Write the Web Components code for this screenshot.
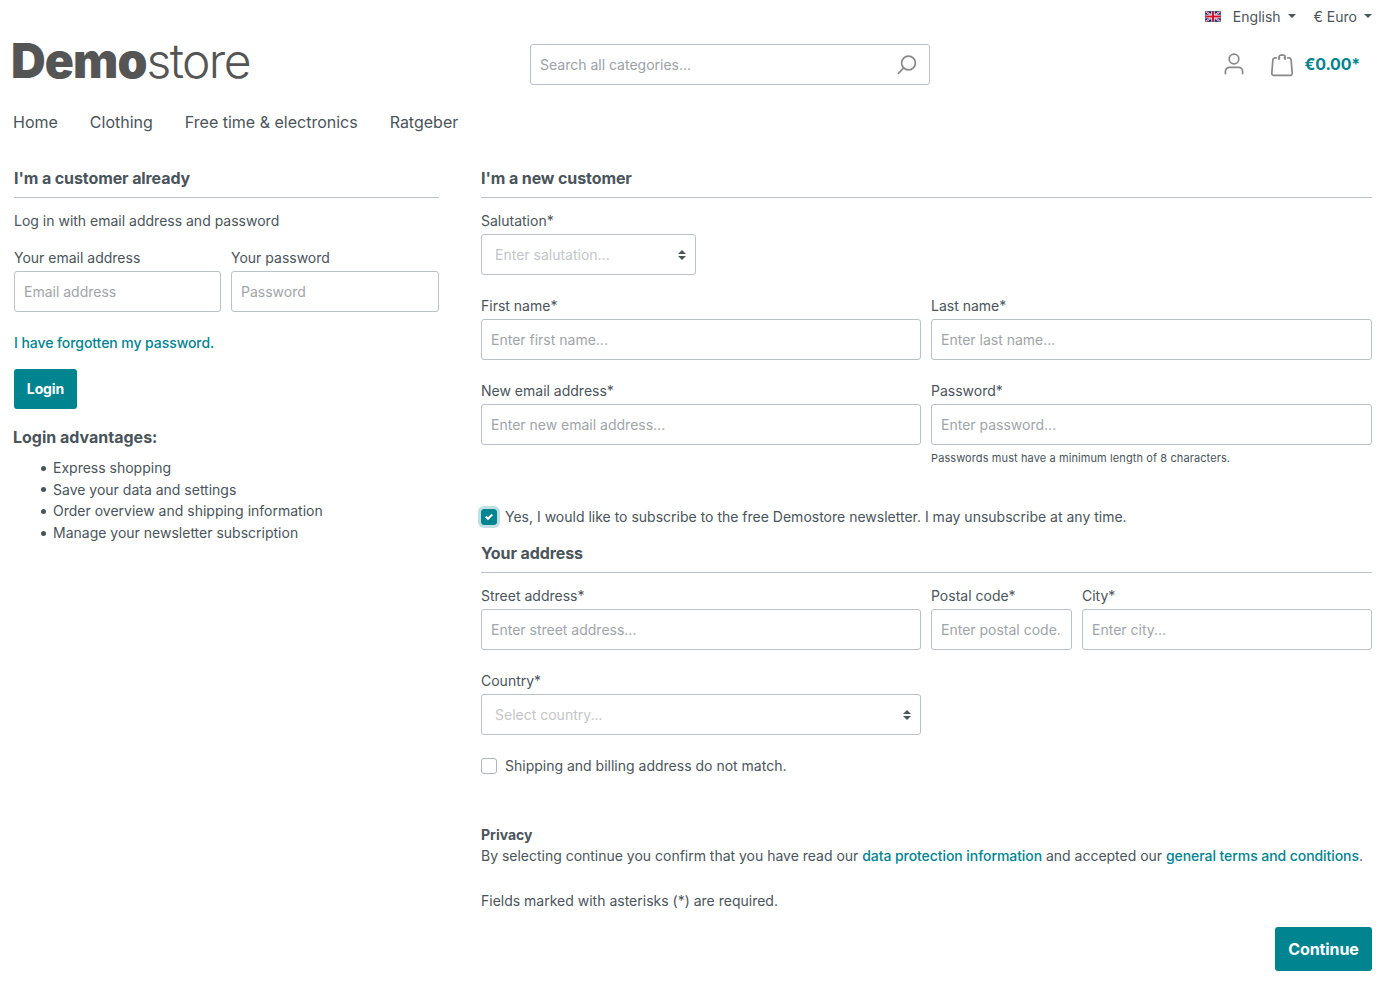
<!DOCTYPE html>
<html lang="en">
<head>
<meta charset="utf-8">
<title>Demostore</title>
<style>
    body {
        margin: 0;
        background: #fff;
        color: #4a545b;
        font: 14px/21px Inter, sans-serif;
        --primary: #008490;
        --border: #bcc1c7;
    }
</style>
</head>
<body>
<store-page></store-page>

<script>
class StoreTopBar extends HTMLElement {
    constructor() {
        super()
        this.attachShadow({ mode: 'open' }).innerHTML = `
        <style>
            :host {
                display: flex;
                justify-content: flex-end;
                height: 34px;
                align-items: center;
                padding-right: 16px;
            }
            span { margin-top: -1px; }
            .flag { width: 16px; height: 11px; margin: -2px 12px 0 0; }
            .caret {
                border: 4px solid transparent;
                border-top-color: currentColor;
                border-bottom: 0;
                margin: -2px 0 0 7px;
            }
            .currency { margin-left: 18px; }
        </style>
        <svg class="flag" viewBox="0 0 16 11">
            <rect width="16" height="11" fill="#0a2a80"/>
            <path d="M0 0l16 11M16 0L0 11" stroke="#fff" stroke-width="1.8"/>
            <path d="M0 0l16 11M16 0L0 11" stroke="#d8102a" stroke-width="0.7"/>
            <path d="M8 0v11M0 5.5h16" stroke="#fff" stroke-width="3.4"/>
            <path d="M8 0v11M0 5.5h16" stroke="#d8102a" stroke-width="2"/>
            <rect x=".5" y=".5" width="15" height="10" fill="none" stroke="#667" stroke-opacity=".5"/>
        </svg>
        <span>English</span><i class="caret"></i>
        <span class="currency">€ Euro</span><i class="caret"></i>
        `
    }
}

class StoreHeader extends HTMLElement {
    constructor() {
        super()
        this.attachShadow({ mode: 'open' }).innerHTML = `
        <style>
            :host {
                display: grid;
                grid-template-columns: 517px 400px 1fr;
                height: 61px;
                padding: 0 28px 0 13px;
            }
            .logo {
                color: #555;
                font-size: 48px;
                line-height: 54px;
                letter-spacing: -1.6px;
                font-weight: 300;
                white-space: nowrap;
                margin-left: -2px;
            }
            .logo b { font-weight: 900; letter-spacing: -0.9px; }
            .search {
                box-sizing: border-box;
                height: 41px;
                margin-top: 10px;
                border: 1px solid var(--border);
                border-radius: 3px;
                display: flex;
                align-items: center;
                padding: 0 11px 0 9px;
            }
            input {
                flex: 1;
                min-width: 0;
                border: 0;
                padding: 0;
                outline: 0;
                background: none;
                font: inherit;
                color: inherit;
            }
            input::placeholder { color: #9ba1a6; opacity: 1; }
            .actions {
                display: flex;
                justify-content: flex-end;
                align-items: center;
                height: 41px;
                margin-top: 10px;
            }
            svg { fill: none; stroke: #888; stroke-width: 1.7; stroke-linecap: round; stroke-linejoin: round; }
            .user { margin: -1px 26px 0 0; }
            .total {
                margin: -1px 0 0 11px;
                font-size: 16px;
                font-weight: 700;
                letter-spacing: -0.2px;
                color: var(--primary);
            }
        </style>
        <div class="logo"><b>Demo</b>store</div>
        <div class="search">
            <input type="text" placeholder="Search all categories...">
            <svg width="22" height="22" viewBox="0 0 22 22">
                <circle cx="12.5" cy="9" r="6.9"/><path d="M7.7 13.9l-5.3 5.4"/>
            </svg>
        </div>
        <div class="actions">
            <svg class="user" width="20" height="22" viewBox="0 0 20 22">
                <circle cx="10" cy="6" r="4.8"/>
                <path d="M1.4 20.6v-2.3a3.9 3.9 0 0 1 3.9-3.9h9.4a3.9 3.9 0 0 1 3.9 3.9v2.3"/>
            </svg>
            <svg width="24" height="24" viewBox="0 0 24 24">
                <path d="M6.4 4.8H4.9a2 2 0 0 0-2 1.8L1.8 20.2a2 2 0 0 0 2 2.2h16.4a2 2 0 0 0 2-2.2L21.1 6.6a2 2 0 0 0-2-1.8h-1.5M8.9 6.2V4.2a2 2 0 0 1 2-2h2.2a2 2 0 0 1 2 2v2M9 4.8h0.6M14.4 4.8h0.6"/>
            </svg>
            <span class="total">€0.00*</span>
        </div>
        `
    }
}

class StoreNav extends HTMLElement {
    constructor() {
        super()
        this.attachShadow({ mode: 'open' }).innerHTML = `
        <style>
            :host {
                display: flex;
                gap: 32px;
                padding: 15px 13px 0;
                font-size: 16px;
                line-height: 24px;
            }
        </style>
        <span>Home</span>
        <span>Clothing</span>
        <span>Free time &amp; electronics</span>
        <span>Ratgeber</span>
        `
    }
}

class PanelTitle extends HTMLElement {
    constructor() {
        super()
        this.attachShadow({ mode: 'open' }).innerHTML = `
        <style>
            :host {
                display: block;
                height: 31px;
                border-bottom: 1px solid var(--border);
                font-size: 16px;
                line-height: 24px;
                font-weight: 700;
                letter-spacing: -0.1px;
            }
        </style>
        <slot></slot>
        `
    }
}

class TextField extends HTMLElement {
    constructor() {
        super()
        this.attachShadow({ mode: 'open' }).innerHTML = `
        <style>
            :host { display: block; min-width: 0; }
            label { display: block; height: 24px; white-space: nowrap; }
            input {
                display: block;
                box-sizing: border-box;
                width: 100%;
                height: 41px;
                padding: 0 9px;
                border: 1px solid var(--border);
                border-radius: 3px;
                outline: 0;
                background: #fff;
                font: inherit;
                color: inherit;
            }
            input::placeholder { color: #a0a5a9; opacity: 1; }
            ::slotted(small) {
                display: block;
                font-size: 11px;
                line-height: 16px;
                letter-spacing: 0.1px;
                margin-top: 5px;
            }
        </style>
        <label for="field"></label>
        <input id="field">
        <slot></slot>
        `
    }
    connectedCallback() {
        const input = this.shadowRoot.querySelector('input')
        this.shadowRoot.querySelector('label').textContent = this.getAttribute('label')
        input.placeholder = this.getAttribute('placeholder')
        input.type = this.getAttribute('type') || 'text'
    }
}

class SelectField extends HTMLElement {
    constructor() {
        super()
        this.attachShadow({ mode: 'open' }).innerHTML = `
        <style>
            :host { display: block; min-width: 0; }
            .label { height: 24px; }
            .box {
                box-sizing: border-box;
                height: 41px;
                padding: 0 9px 0 13px;
                border: 1px solid var(--border);
                border-radius: 3px;
                display: flex;
                align-items: center;
                justify-content: space-between;
                color: #c3c6c9;
            }
            svg { fill: #4a545b; }
        </style>
        <div class="label"></div>
        <div class="box">
            <slot></slot>
            <svg width="8" height="10" viewBox="0 0 8 10"><path d="M4 0l4 4H0zM4 10L0 6h8z"/></svg>
        </div>
        `
    }
    connectedCallback() {
        this.shadowRoot.querySelector('.label').textContent = this.getAttribute('label')
    }
}

class CheckField extends HTMLElement {
    constructor() {
        super()
        this.attachShadow({ mode: 'open' }).innerHTML = `
        <style>
            :host { display: flex; align-items: center; gap: 8px; height: 21px; }
            .box {
                box-sizing: border-box;
                width: 16px;
                height: 16px;
                border: 1px solid #adb5bd;
                border-radius: 3px;
                flex: none;
                display: flex;
                align-items: center;
                justify-content: center;
            }
            svg { display: none; }
            :host([checked]) .box {
                background: var(--primary);
                border-color: var(--primary);
                box-shadow: 0 0 0 3px rgba(0, 132, 144, 0.25);
            }
            :host([checked]) svg { display: block; }
        </style>
        <span class="box">
            <svg width="8" height="8" viewBox="0 0 8 8"><path fill="#fff" d="M6.564.75l-3.59 3.612-1.538-1.55L0 4.26l2.974 2.99L8 2.193z"/></svg>
        </span>
        <slot></slot>
        `
    }
}

class StoreButton extends HTMLElement {
    constructor() {
        super()
        this.attachShadow({ mode: 'open' }).innerHTML = `
        <style>
            :host { display: block; }
            button {
                display: block;
                box-sizing: border-box;
                width: 63px;
                height: 40px;
                padding: 0 0 2px;
                border: 0;
                border-radius: 3px;
                background: var(--primary);
                color: #fff;
                font: inherit;
                font-weight: 700;
                letter-spacing: -0.1px;
            }
            :host([large]) button { width: 97px; height: 44px; padding: 0; font-size: 16px; }
        </style>
        <button><slot></slot></button>
        `
    }
}

class LoginPanel extends HTMLElement {
    constructor() {
        super()
        this.attachShadow({ mode: 'open' }).innerHTML = `
        <style>
            :host { display: block; }
            p { margin: 12px 0 16px; }
            .fields { display: grid; grid-template-columns: 207px 208px; gap: 10px; }
            .forgot {
                color: var(--primary);
                font-weight: 500;
                letter-spacing: -0.07px;
                margin: 20px 0 16px;
            }
            h2 { margin: 16px 0 8px -1px; font-size: 16px; line-height: 24px; font-weight: 700; }
            ul { margin: 0; padding: 0; list-style: none; line-height: 21.6px; }
            li { display: flex; align-items: center; padding-left: 27px; }
            li::before {
                content: '';
                width: 5px;
                height: 5px;
                margin: 1px 7px 0 0;
                border-radius: 50%;
                background: currentColor;
            }
        </style>
        <panel-title>I'm a customer already</panel-title>
        <p>Log in with email address and password</p>
        <div class="fields">
            <text-field label="Your email address" placeholder="Email address"></text-field>
            <text-field label="Your password" placeholder="Password" type="password"></text-field>
        </div>
        <div class="forgot">I have forgotten my password.</div>
        <store-button>Login</store-button>
        <h2>Login advantages:</h2>
        <ul>
            <li>Express shopping</li>
            <li>Save your data and settings</li>
            <li>Order overview and shipping information</li>
            <li>Manage your newsletter subscription</li>
        </ul>
        `
    }
}

class RegisterPanel extends HTMLElement {
    constructor() {
        super()
        this.attachShadow({ mode: 'open' }).innerHTML = `
        <style>
            :host { display: block; }
            .row { display: grid; grid-template-columns: 440px 441px; gap: 10px; margin-top: 20px; }
            .first { grid-template-columns: 215px; margin-top: 12px; }
            .address { grid-template-columns: 440px 141px 290px; margin-top: 12px; }
            .newsletter { margin: 40px 0 14px; }
            .shipping { margin: 20px 0 48px; }
            .privacy { white-space: nowrap; letter-spacing: -0.012px; }
            .privacy a { color: var(--primary); font-weight: 500; letter-spacing: -0.07px; }
            .required { margin-top: 24px; }
            .submit { display: flex; justify-content: flex-end; margin-top: 16px; }
        </style>
        <panel-title>I'm a new customer</panel-title>
        <div class="row first">
            <select-field label="Salutation*">Enter salutation...</select-field>
        </div>
        <div class="row">
            <text-field label="First name*" placeholder="Enter first name..."></text-field>
            <text-field label="Last name*" placeholder="Enter last name..."></text-field>
        </div>
        <div class="row">
            <text-field label="New email address*" placeholder="Enter new email address..."></text-field>
            <text-field label="Password*" placeholder="Enter password..." type="password">
                <small>Passwords must have a minimum length of 8 characters.</small>
            </text-field>
        </div>
        <check-field class="newsletter" checked>Yes, I would like to subscribe to the free Demostore newsletter. I may unsubscribe at any time.</check-field>
        <panel-title>Your address</panel-title>
        <div class="row address">
            <text-field label="Street address*" placeholder="Enter street address..."></text-field>
            <text-field label="Postal code*" placeholder="Enter postal code..."></text-field>
            <text-field label="City*" placeholder="Enter city..."></text-field>
        </div>
        <div class="row">
            <select-field label="Country*">Select country...</select-field>
        </div>
        <check-field class="shipping">Shipping and billing address do not match.</check-field>
        <b>Privacy</b>
        <div class="privacy">By selecting continue you confirm that you have read our <a>data protection information</a> and accepted our <a>general terms and conditions</a>.</div>
        <div class="required">Fields marked with asterisks (*) are required.</div>
        <div class="submit"><store-button large>Continue</store-button></div>
        `
    }
}

class StorePage extends HTMLElement {
    constructor() {
        super()
        this.attachShadow({ mode: 'open' }).innerHTML = `
        <style>
            :host { display: block; width: 1388px; height: 991px; overflow: hidden; }
            main {
                display: grid;
                grid-template-columns: 425px 891px;
                column-gap: 42px;
                padding: 32px 16px 0 14px;
            }
        </style>
        <store-top-bar></store-top-bar>
        <store-header></store-header>
        <store-nav></store-nav>
        <main>
            <login-panel></login-panel>
            <register-panel></register-panel>
        </main>
        `
    }
}

customElements.define('store-top-bar', StoreTopBar)
customElements.define('store-header', StoreHeader)
customElements.define('store-nav', StoreNav)
customElements.define('panel-title', PanelTitle)
customElements.define('text-field', TextField)
customElements.define('select-field', SelectField)
customElements.define('check-field', CheckField)
customElements.define('store-button', StoreButton)
customElements.define('login-panel', LoginPanel)
customElements.define('register-panel', RegisterPanel)
customElements.define('store-page', StorePage)
</script>
</body>
</html>
